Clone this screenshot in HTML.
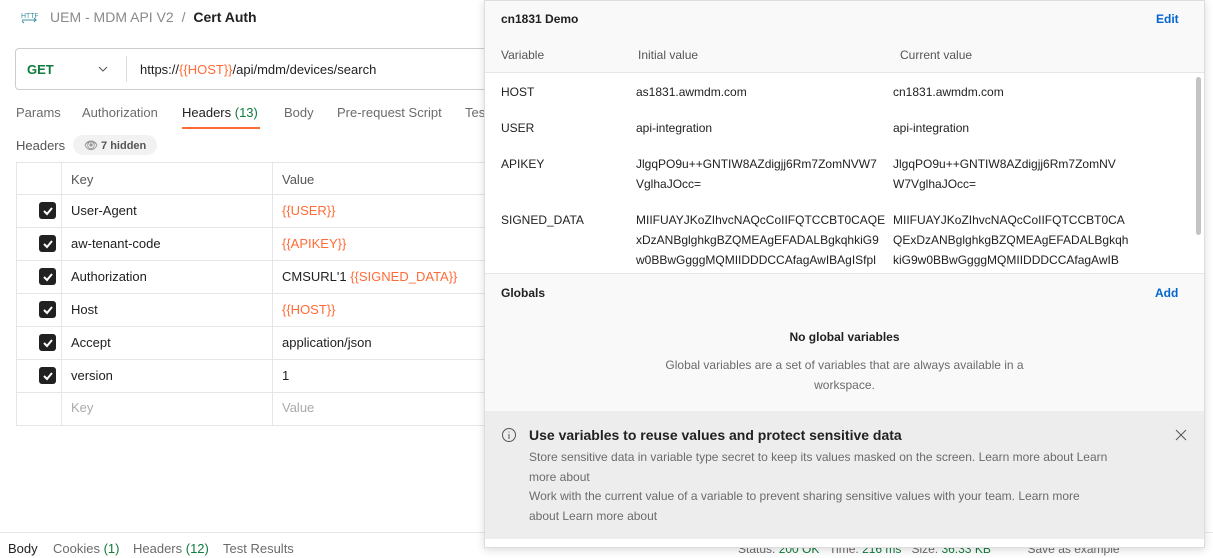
<!DOCTYPE html>
<html><head><meta charset="utf-8"><style>
*{box-sizing:border-box;margin:0;padding:0}
body{width:1213px;height:558px;overflow:hidden;background:#fff;font-family:"Liberation Sans",sans-serif;font-size:13px;color:#212121;position:relative}
.a{position:absolute;white-space:nowrap}
.o{color:#ff6c37}
.g{color:#0f7b3c}
.m{color:#6b6b6b}
.cb{position:absolute;left:39px;width:17px;height:17px;background:#212121;border-radius:3px}
.cb svg{position:absolute;left:2px;top:2px}
.hl{position:absolute;left:16px;width:480px;height:1px;background:#e6e6e6}
.vl{position:absolute;top:162px;height:264px;width:1px;background:#e6e6e6}
#pop{position:absolute;left:484px;top:0;width:721px;height:548px;background:#fff;border:1px solid #ddd;box-shadow:0 2px 8px rgba(0,0,0,.15)}
#pop .a{font-size:12px;line-height:20px}
</style></head><body>
<svg class="a" style="left:20px;top:9px" width="18" height="16" viewBox="0 0 18 16"><text x="1" y="9" font-size="7" fill="#3b8fa3" font-family="Liberation Sans">HTTP</text><path d="M2 11h14M14 9l2 2-2 2M4 14L2 12" stroke="#3b8fa3" fill="none" stroke-width="1"/></svg>
<div class="a" style="left:50px;top:9px;font-size:14px;color:#8a8a8a">UEM - MDM API V2 <span style="margin:0 4px">/</span> <b style="color:#212121;font-weight:600">Cert Auth</b></div>
<div class="a" style="left:15px;top:48px;width:480px;height:42px;border:1px solid #ccc;border-radius:4px"></div>
<div class="a" style="left:27px;top:62px;font-weight:bold;color:#0f7b3c">GET</div>
<svg class="a" style="left:98px;top:66px" width="10" height="6"><path d="M1 1l4 4 4-4" stroke="#555" fill="none"/></svg>
<div class="a" style="left:126px;top:56px;width:1px;height:26px;background:#ddd"></div>
<div class="a" style="left:140px;top:62px">https://<span class="o">{{HOST}}</span>/api/mdm/devices/search</div>
<div class="a m" style="left:16px;top:105px">Params</div>
<div class="a m" style="left:82px;top:105px">Authorization</div>
<div class="a" style="left:182px;top:105px">Headers <span class="g">(13)</span></div>
<div class="a" style="left:182px;top:127px;width:78px;height:2px;background:#ff6c37"></div>
<div class="a m" style="left:284px;top:105px">Body</div>
<div class="a m" style="left:337px;top:105px">Pre-request Script</div>
<div class="a m" style="left:465px;top:105px">Tes</div>
<div class="a m" style="left:16px;top:138px;color:#555">Headers</div>
<div class="a" style="left:73px;top:135px;width:84px;height:20px;background:#f2f2f2;border-radius:10px"></div>
<div class="a" style="left:84px;top:139px;font-size:11px;color:#555;font-weight:600"><span style="color:#999">👁</span> 7 hidden</div>
<div class="hl" style="top:162px"></div><div class="hl" style="top:194px"></div><div class="hl" style="top:227px"></div><div class="hl" style="top:260px"></div><div class="hl" style="top:293px"></div><div class="hl" style="top:326px"></div><div class="hl" style="top:359px"></div><div class="hl" style="top:392px"></div><div class="hl" style="top:425px"></div>
<div class="vl" style="left:16px"></div><div class="vl" style="left:61px"></div><div class="vl" style="left:272px"></div>
<div class="a m" style="left:71px;top:172px;color:#555">Key</div>
<div class="a m" style="left:282px;top:172px;color:#555">Value</div>
<div class="cb" style="top:202px"><svg width="13" height="13"><path d="M3 7l3 3 5-6" stroke="#fff" stroke-width="2" fill="none"/></svg></div>
<div class="cb" style="top:235px"><svg width="13" height="13"><path d="M3 7l3 3 5-6" stroke="#fff" stroke-width="2" fill="none"/></svg></div>
<div class="cb" style="top:268px"><svg width="13" height="13"><path d="M3 7l3 3 5-6" stroke="#fff" stroke-width="2" fill="none"/></svg></div>
<div class="cb" style="top:301px"><svg width="13" height="13"><path d="M3 7l3 3 5-6" stroke="#fff" stroke-width="2" fill="none"/></svg></div>
<div class="cb" style="top:334px"><svg width="13" height="13"><path d="M3 7l3 3 5-6" stroke="#fff" stroke-width="2" fill="none"/></svg></div>
<div class="cb" style="top:367px"><svg width="13" height="13"><path d="M3 7l3 3 5-6" stroke="#fff" stroke-width="2" fill="none"/></svg></div>
<div class="a" style="left:71px;top:203px">User-Agent</div><div class="a o" style="left:282px;top:203px">{{USER}}</div>
<div class="a" style="left:71px;top:236px">aw-tenant-code</div><div class="a o" style="left:282px;top:236px">{{APIKEY}}</div>
<div class="a" style="left:71px;top:269px">Authorization</div><div class="a" style="left:282px;top:269px">CMSURL'1 <span class="o">{{SIGNED_DATA}}</span></div>
<div class="a" style="left:71px;top:302px">Host</div><div class="a o" style="left:282px;top:302px">{{HOST}}</div>
<div class="a" style="left:71px;top:335px">Accept</div><div class="a" style="left:282px;top:335px">application/json</div>
<div class="a" style="left:71px;top:368px">version</div><div class="a" style="left:282px;top:368px">1</div>
<div class="a" style="left:71px;top:400px;color:#aaa">Key</div><div class="a" style="left:282px;top:400px;color:#aaa">Value</div>
<div class="a" style="left:0;top:532px;width:1213px;height:1px;background:#e6e6e6"></div>
<div class="a" style="left:8px;top:541px">Body</div>
<div class="a m" style="left:53px;top:541px">Cookies <span class="g">(1)</span></div>
<div class="a m" style="left:133px;top:541px">Headers <span class="g">(12)</span></div>
<div class="a m" style="left:223px;top:541px">Test Results</div>
<div class="a m" style="left:738px;top:542px;font-size:12px">Status: <span class="g">200 OK</span> &nbsp; Time: <span class="g">216 ms</span> &nbsp; Size: <span class="g">36.33 KB</span> &nbsp;&nbsp;&nbsp;&nbsp;&nbsp;&nbsp;&nbsp;&nbsp;&nbsp; Save as example</div>
<div id="pop">
<div class="a" style="left:0;top:0;width:719px;height:72px;background:#f9f9f9;border-bottom:1px solid #e6e6e6"></div>
<div class="a" style="left:16px;top:8px;font-weight:600">cn1831 Demo</div>
<div class="a" style="left:671px;top:8px;color:#0265d2;font-weight:600">Edit</div>
<div class="a m" style="left:16px;top:44px;color:#555">Variable</div>
<div class="a m" style="left:153px;top:44px;color:#555">Initial value</div>
<div class="a m" style="left:415px;top:44px;color:#555">Current value</div>
<div class="a" style="left:16px;top:81px">HOST</div><div class="a" style="left:151px;top:81px">as1831.awmdm.com</div><div class="a" style="left:408px;top:81px">cn1831.awmdm.com</div>
<div class="a" style="left:16px;top:117px">USER</div><div class="a" style="left:151px;top:117px">api-integration</div><div class="a" style="left:408px;top:117px">api-integration</div>
<div class="a" style="left:16px;top:153px">APIKEY</div><div class="a" style="left:151px;top:153px">JlgqPO9u++GNTIW8AZdigjj6Rm7ZomNVW7<br>VglhaJOcc=</div><div class="a" style="left:408px;top:153px">JlgqPO9u++GNTIW8AZdigjj6Rm7ZomNV<br>W7VglhaJOcc=</div>
<div class="a" style="left:16px;top:209px">SIGNED_DATA</div><div class="a" style="left:151px;top:209px;width:250px;overflow:hidden">MIIFUAYJKoZIhvcNAQcCoIIFQTCCBT0CAQE<br>xDzANBglghkgBZQMEAgEFADALBgkqhkiG9<br>w0BBwGgggMQMIIDDDCCAfagAwIBAgISfpl</div><div class="a" style="left:408px;top:209px">MIIFUAYJKoZIhvcNAQcCoIIFQTCCBT0CA<br>QExDzANBglghkgBZQMEAgEFADALBgkqh<br>kiG9w0BBwGgggMQMIIDDDCCAfagAwIB</div>
<div class="a" style="left:711px;top:76px;width:5px;height:158px;background:#c4c4c4;border-radius:3px"></div>
<div class="a" style="left:0;top:272px;width:719px;height:138px;background:#f9f9f9;border-top:1px solid #e6e6e6"></div>
<div class="a" style="left:16px;top:282px;font-weight:600">Globals</div>
<div class="a" style="left:670px;top:282px;color:#0265d2;font-weight:600">Add</div>
<div class="a" style="left:0;top:326px;width:719px;text-align:center;font-weight:600">No global variables</div>
<div class="a m" style="left:0;top:354px;width:719px;text-align:center">Global variables are a set of variables that are always available in a<br>workspace.</div>
<div class="a" style="left:0;top:410px;width:719px;height:128px;background:#ededed"></div>
<svg class="a" style="left:16px;top:426px" width="16" height="16"><circle cx="8" cy="8" r="6.5" stroke="#555" fill="none"/><path d="M8 7v5M8 4.5v1" stroke="#555"/></svg>
<div class="a" style="left:44px;top:424px;font-size:14px!important;font-weight:600">Use variables to reuse values and protect sensitive data</div>
<svg class="a" style="left:690px;top:428px" width="12" height="12"><path d="M1 1l10 10M11 1L1 11" stroke="#555"/></svg>
<div class="a m" style="left:44px;top:447px;line-height:19.5px">Store sensitive data in variable type secret to keep its values masked on the screen. Learn more about Learn<br>more about<br>Work with the current value of a variable to prevent sharing sensitive values with your team. Learn more<br>about Learn more about</div>
</div>
</body></html>
